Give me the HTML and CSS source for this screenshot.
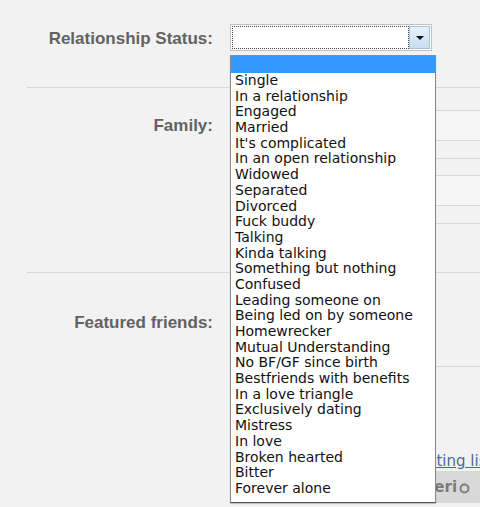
FILE: index.html
```html
<!DOCTYPE html>
<html>
<head>
<meta charset="utf-8">
<link rel="stylesheet" href="styles.css">
</head>
<body>
<div class="form">
  <div class="row row-status">
    <div class="label">Relationship Status:</div>
    <div class="field">
      <div class="select">
        <div class="select-value"></div>
        <div class="select-btn"><span class="caret"></span></div>
      </div>
    </div>
  </div>
  <div class="row row-family">
    <div class="label">Family:</div>
    <div class="field fam">
      <div class="band b1"></div>
      <div class="band b2"></div>
      <div class="band b3"></div>
      <div class="band b4"></div>
      <div class="band b5"></div>
      <div class="band b6"></div>
    </div>
  </div>
  <div class="row row-friends">
    <div class="label">Featured friends:</div>
    <div class="field friends">
      <div class="friends-box"></div>
      <div class="link-line"><a class="link" href="#">Add to existing list</a></div>
      <div class="friend-bar">
        <span class="friend-name">Keri</span>
        <svg class="ring" width="11" height="11" viewBox="0 0 11 11"><circle cx="5.5" cy="5.5" r="4" fill="none" stroke="#7d7d7d" stroke-width="2"/></svg>
      </div>
    </div>
  </div>
</div>
<ul class="dropdown">
  <li class="opt selected">&nbsp;</li>
  <li class="opt">Single</li>
  <li class="opt">In a relationship</li>
  <li class="opt">Engaged</li>
  <li class="opt">Married</li>
  <li class="opt">It's complicated</li>
  <li class="opt">In an open relationship</li>
  <li class="opt">Widowed</li>
  <li class="opt">Separated</li>
  <li class="opt">Divorced</li>
  <li class="opt">Fuck buddy</li>
  <li class="opt">Talking</li>
  <li class="opt">Kinda talking</li>
  <li class="opt">Something but nothing</li>
  <li class="opt">Confused</li>
  <li class="opt">Leading someone on</li>
  <li class="opt">Being led on by someone</li>
  <li class="opt">Homewrecker</li>
  <li class="opt">Mutual Understanding</li>
  <li class="opt">No BF/GF since birth</li>
  <li class="opt">Bestfriends with benefits</li>
  <li class="opt">In a love triangle</li>
  <li class="opt">Exclusively dating</li>
  <li class="opt">Mistress</li>
  <li class="opt">In love</li>
  <li class="opt">Broken hearted</li>
  <li class="opt">Bitter</li>
  <li class="opt">Forever alone</li>
</ul>
</body>
</html>
```
FILE: styles.css
```css
html, body {
  margin: 0;
  padding: 0;
}
body {
  width: 480px;
  height: 507px;
  overflow: hidden;
  background: #f2f2f2;
  position: relative;
  font-family: "DejaVu Sans", Verdana, sans-serif;
}
.form {
  padding-left: 27px;
  width: 453px;
  overflow: hidden;
}
.row {
  display: grid;
  grid-template-columns: 186px 1fr;
  column-gap: 17px;
  box-sizing: border-box;
  border-bottom: 1px solid #d6d6d6;
}
.label {
  font-family: "Liberation Sans", Arial, sans-serif;
  font-weight: bold;
  font-size: 17px;
  line-height: 20px;
  color: #626262;
  text-align: right;
  white-space: nowrap;
}
.row-status {
  height: 88px;
  padding-top: 24px;
}
.row-status .label {
  margin-top: 5px;
}
.select {
  width: 202px;
  height: 27px;
  box-sizing: border-box;
  border: 1px solid #c2c2c2;
  background: #fff;
  padding: 1px;
  display: flex;
}
.select-value {
  flex: 1;
  border: 1px dotted #444;
}
.select-btn {
  width: 21px;
  box-sizing: border-box;
  border: 1px solid #a9c1da;
  background: linear-gradient(#e9f3fc, #c6ddf2);
  display: flex;
  align-items: center;
  justify-content: center;
}
.caret {
  width: 0;
  height: 0;
  border-left: 4px solid transparent;
  border-right: 4px solid transparent;
  border-top: 4px solid #111;
}
.row-family {
  height: 185px;
}
.row-family .label {
  margin-top: 28px;
}
.fam {
  margin-top: 22px;
}
.band {
  box-sizing: border-box;
  border-top: 1px solid #d6d6d6;
}
.b1 { height: 30px; background: #f6f6f6; }
.b2 { height: 18px; }
.b3 { height: 17px; }
.b4 { height: 30px; background: #f6f6f6; }
.b5 { height: 18px; }
.b6 { height: 1px; }
.row-friends {
  border-bottom: none;
  height: 234px;
}
.row-friends .label {
  margin-top: 40px;
}
.friends {
  display: flex;
  flex-direction: column;
  min-width: 0;
}
.friends-box {
  height: 94px;
  box-sizing: border-box;
  border-bottom: 1px solid #d6d6d6;
}
.link-line {
  margin-top: 84px;
  height: 20px;
  padding-left: 123px;
  font-size: 15px;
  line-height: 21px;
  white-space: nowrap;
}
.link {
  color: #4b6a9b;
  text-decoration: underline;
}
.friend-bar {
  height: 32px;
  background: #d8d8d8;
  display: flex;
  align-items: center;
  gap: 2px;
  padding-left: 193px;
}
.friend-name {
  font-family: "DejaVu Sans", Verdana, sans-serif;
  font-weight: bold;
  font-size: 15px;
  color: #7a7a7a;
  white-space: nowrap;
}
.ring {
  display: block;
  margin-top: 2px;
}
.dropdown {
  position: absolute;
  left: 230px;
  top: 55px;
  width: 206px;
  height: 448px;
  box-sizing: border-box;
  margin: 0;
  padding: 0 0 4px 0;
  list-style: none;
  background: #fff;
  border: 1px solid #8a8a8a;
  border-bottom-color: #555;
  box-shadow: 0 1px 1px rgba(0,0,0,0.2);
}
.opt {
  font-family: "DejaVu Sans", Verdana, sans-serif;
  font-size: 14px;
  line-height: 15.7px;
  height: 15.7px;
  color: #111;
  padding-left: 4px;
  white-space: nowrap;
}
.opt.selected {
  height: 17px;
  line-height: 17px;
  background: #3399ff;
}
```
